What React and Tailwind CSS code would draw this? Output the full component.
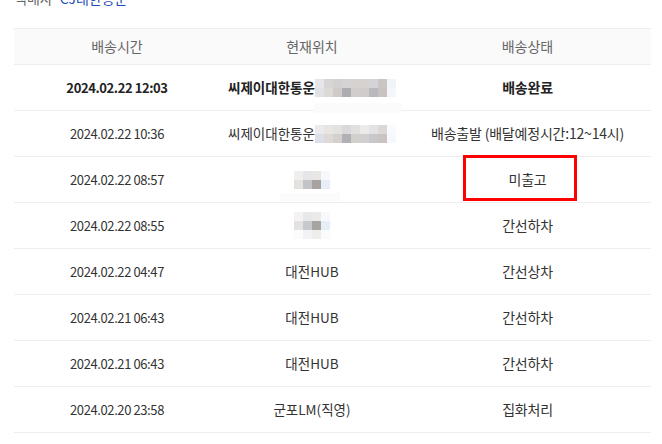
const rows = [
  { time: '2024.02.22 12:03', place: '씨제이대한통운', blur: 'wide1', status: '배송완료', bold: true },
  { time: '2024.02.22 10:36', place: '씨제이대한통운', blur: 'wide2', status: '배송출발 (배달예정시간:12~14시)' },
  { time: '2024.02.22 08:57', place: '', blur: 'small1', status: '미출고' },
  { time: '2024.02.22 08:55', place: '', blur: 'small2', status: '간선하차' },
  { time: '2024.02.22 04:47', place: '대전HUB', status: '간선상차' },
  { time: '2024.02.21 06:43', place: '대전HUB', status: '간선하차' },
  { time: '2024.02.21 06:43', place: '대전HUB', status: '간선하차' },
  { time: '2024.02.20 23:58', place: '군포LM(직영)', status: '집화처리' },
]

const mosaics = {
  wide1: [
    ['#e6e6e8', '#d9d5d4', '#d3d1cf', '#d5d3d3', '#d5d2d0', '#d7d2d0', '#d4d4d6', '#cbc6c3', '#eff4f9'],
    ['#e1e2e5', '#dcd9d7', '#cfcbc8', '#adadb1', '#d0cdcb', '#cfcccb', '#b8b8bd', '#c8c3c0', '#f3f7fb'],
  ],
  wide2: [
    ['#ebebed', '#e8e4e2', '#e4e2e1', '#d9d8da', '#e2e0df', '#ebebec', '#e3e2e4', '#dcd8d6', '#f8fafd'],
    ['#dce0e6', '#dcd9d8', '#d4d0cd', '#b0b0b5', '#d2cfcd', '#d1cfcf', '#c8c7cb', '#c9c4c1', '#f5f8fc'],
  ],
  small1: [
    ['#f0efee', '#e6e6e9', '#e9e7e5', '#f6f8fc'],
    ['#e3e2df', '#c3c4c8', '#a7a29f', '#e8eef7'],
  ],
  small2: [
    ['#f4f3f2', '#e8e8ea', '#eceae8', '#f7f9fc'],
    ['#e3e2e0', '#c8c9cc', '#a8a4a1', '#e8eef7'],
    ['#fbfbfa', '#f0f2f5', '#eeeeed', '#fafbfc'],
  ],
}

function Mosaic({ name }) {
  return (
    <div className="flex flex-col">
      {mosaics[name].map((line, i) => (
        <div key={i} className="flex">
          {line.map((c, j) => (
            <div key={j} className="w-[9px] h-[9px]" style={{ backgroundColor: c }} />
          ))}
        </div>
      ))}
    </div>
  )
}

export default function App() {
  return (
    <div
      className="relative w-[662px] h-[444px] overflow-hidden bg-white text-[#333]"
      style={{ fontFamily: '"Noto Sans CJK KR", "Noto Sans", sans-serif' }}
    >
      <div className="mt-[-10px] h-[17px] leading-[17px] text-[14px] pl-[14px] flex gap-[7px]">
        <span className="text-[#666]">택배사</span>
        <span className="text-[#1d4fb8]">CJ대한통운</span>
      </div>

      <div className="ml-[14px] mt-[21px] w-[637px]">
        <div className="grid grid-cols-[206px_184px_1fr] h-[37px] items-center bg-[#fafafa] border-y border-[#eee] text-[#666] text-[14px] text-center">
          <div>배송시간</div>
          <div>현재위치</div>
          <div>배송상태</div>
        </div>
        {rows.map((r, i) => (
          <div
            key={i}
            className={`grid grid-cols-[206px_184px_1fr] h-[46px] items-center border-b border-[#eee] text-center ${
              r.bold ? 'font-bold text-[#222]' : ''
            }`}
          >
            <div className="text-[13px] tracking-[-0.4px]">{r.time}</div>
            <div className="relative flex items-center justify-center h-full text-[13.5px]">
              <span>{r.place}</span>
              {r.blur && <Mosaic name={r.blur} />}
              {r.blur === 'wide1' && (
                <div className="absolute left-[94px] top-[38px] w-[88px] h-[10px] bg-[#fbfbfb]" />
              )}
              {r.blur === 'small1' && (
                <div className="absolute left-[60px] top-[36px] w-[60px] h-[8px] bg-[#fbfbfb]" />
              )}
            </div>
            <div className="text-[14px] tracking-[-0.2px]">{r.status}</div>
          </div>
        ))}
      </div>

      <div className="absolute left-[463px] top-[155px] w-[114px] h-[46px] border-[3px] border-[#ff0000]" />
    </div>
  )
}
